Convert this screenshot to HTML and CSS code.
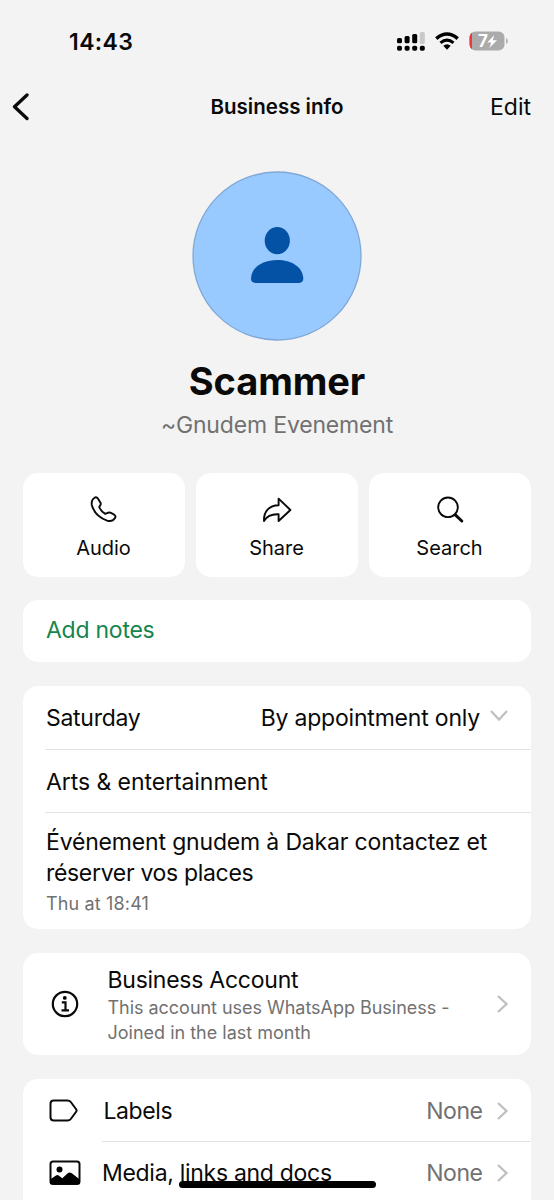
FILE: index.html
```
<!DOCTYPE html>
<html lang="en">
<head>
<meta charset="utf-8">
<title>Business info</title>
<link rel="stylesheet" href="styles.css">
</head>
<body>
<div class="screen">
  <header class="status">
    <span class="time">14:43</span>
    <div class="status-icons">
      <svg class="signal" width="28" height="20" viewBox="0 0 28 20">
        <rect x="0" y="7" width="5" height="5.2" rx="1.5"/>
        <rect x="7.6" y="5" width="5" height="7.2" rx="1.5"/>
        <rect x="15.2" y="3" width="5" height="9.2" rx="1.5"/>
        <rect x="22.8" y="1" width="5" height="12" rx="1.5" fill="#c9c9c9"/>
        <rect x="0" y="14.7" width="5" height="5" rx="1.8"/>
        <rect x="7.6" y="14.7" width="5" height="5" rx="1.8"/>
        <rect x="15.2" y="14.7" width="5" height="5" rx="1.8"/>
        <rect x="22.8" y="14.7" width="5" height="5" rx="1.8"/>
      </svg>
      <svg class="wifi" width="24" height="18" viewBox="0 0 24 18">
        <path d="M1.300 6.600Q12-2.600 22.700 6.600" fill="none" stroke="#000" stroke-width="3.500"/>
        <path d="M5.500 10.900Q12 5.300 18.500 10.900" fill="none" stroke="#000" stroke-width="3.200"/>
        <path d="M8.300 13.800Q12 10.600 15.700 13.800L12 17.800Z"/>
      </svg>
      <div class="battery">
        <svg width="40" height="20" viewBox="0 0 40 20">
          <rect x="0.5" y="0.5" width="35" height="19" rx="6" fill="#ababab"/>
          <path d="M3 1.700A6 6 0 0 0 .5 6.500V13.500A6 6 0 0 0 3 18.300Z" fill="#f0383c"/>
          <path d="M37 7Q39 8 39 10T37 13Z" fill="#b4b4b4"/>
          <path d="M25.300 4L18.300 11.500H22.300L20.300 17L28 9.200H23.700Z" fill="#fff"/>
        </svg>
        <span class="level">7</span>
      </div>
    </div>
  </header>

  <nav class="nav">
    <svg class="back" width="18" height="28" viewBox="0 0 18 28"><path d="M16 2L3.500 13.700L16 25.500" fill="none" stroke="#0a0a0a" stroke-width="3.300" stroke-linecap="round" stroke-linejoin="round"/></svg>
    <h1 class="nav-title">Business info</h1>
    <span class="edit">Edit</span>
  </nav>

  <section class="profile">
    <svg class="avatar" width="170" height="170" viewBox="0 0 170 170">
      <circle cx="85" cy="85" r="84" fill="#99caff" stroke="#80a8d6" stroke-width="1.300"/>
      <ellipse cx="85.300" cy="69.700" rx="12.600" ry="13.600" fill="#0452a5"/>
      <path d="M59 107.500C59.500 96 71 89 85.300 89S110.800 96 111.300 107.500Q111.300 111.900 107 111.900H63.500Q59 111.900 59 107.500Z" fill="#0452a5"/>
    </svg>
    <h2 class="name">Scammer</h2>
    <p class="alias">~Gnudem Evenement</p>
  </section>

  <section class="actions">
    <div class="action">
      <svg width="30" height="30" viewBox="0 0 30 30"><path d="M6 2.500Q7.800 1.900 8.900 3.500L11.500 7.700Q12.200 9 11.300 10.300L10.200 12Q12 16.500 16.300 18.900L18 18.100Q19.800 17.200 21.400 17.700L25.200 19.700Q27.300 21 26 23Q23.500 27 18.600 25.800Q6 21.600 2.800 10Q2 4.800 6 2.500Z"/></svg>
      <span>Audio</span>
    </div>
    <div class="action">
      <svg width="30" height="30" viewBox="0 0 30 30"><path d="M16.600 3.600L28.400 15L16.600 26V19.300C9.500 18.900 5 21 2 25.900C1.600 16.500 7 10.500 16.600 10.300Z"/></svg>
      <span>Share</span>
    </div>
    <div class="action">
      <svg width="30" height="30" viewBox="0 0 30 30"><circle cx="13" cy="12.300" r="9.800"/><path d="M20.300 19.800L26.800 26" stroke-width="3" stroke-linecap="round"/></svg>
      <span>Search</span>
    </div>
  </section>

  <section class="card notes"><span class="add-notes">Add notes</span></section>

  <section class="card details">
    <div class="detail-row detail-hours">
      <span class="day">Saturday</span>
      <span class="hours">By appointment only</span>
      <svg width="20" height="14" viewBox="0 0 20 14"><path d="M2 2L10 10.600L18 2" fill="none" stroke="#bfbfbf" stroke-width="2.200"/></svg>
    </div>
    <div class="detail-row"><span class="category">Arts &amp; entertainment</span></div>
    <div class="about">
      <p class="about-text"><span class="line-one">Événement gnudem à Dakar contactez et</span><br><span class="line-two">réserver vos places</span></p>
      <p class="about-date">Thu at 18:41</p>
    </div>
  </section>

  <section class="card account">
    <svg class="info" width="28" height="28" viewBox="0 0 28 28"><circle cx="14" cy="14" r="12.200" fill="none" stroke="#0a0a0a" stroke-width="2.200"/><circle cx="13.800" cy="7.900" r="1.900"/><path d="M10.800 12.400H14.500V20.200M10.500 20.400H18" fill="none" stroke="#0a0a0a" stroke-width="2.200"/></svg>
    <div class="account-text">
      <p class="account-title">Business Account</p>
      <p class="account-sub"><span class="sub-one">This account uses WhatsApp Business -</span><br><span class="sub-two">Joined in the last month</span></p>
    </div>
    <svg class="chevron" width="14" height="20" viewBox="0 0 14 20"><path d="M2 2L10.500 10L2 18" fill="none" stroke="#bfbfbf" stroke-width="2.300"/></svg>
  </section>

  <section class="card links">
    <div class="link-row">
      <svg class="link-icon" width="34" height="28" viewBox="0 0 34 28"><path d="M5.800 3.500H19.500Q21.600 3.500 22.800 5L28.300 12.500Q29 13.500 28.300 14.500L22.800 22Q21.600 23.500 19.500 23.500H5.800Q2.500 23.500 2.500 20.300V6.700Q2.500 3.500 5.800 3.500Z" fill="none" stroke="#0a0a0a" stroke-width="2"/></svg>
      <div class="link-body">
        <span class="labels">Labels</span><span class="none">None</span>
        <svg class="chevron" width="14" height="20" viewBox="0 0 14 20"><path d="M2 2L10.500 10L2 18" fill="none" stroke="#bfbfbf" stroke-width="2.300"/></svg>
      </div>
    </div>
    <div class="link-row">
      <svg class="link-icon" width="34" height="28" viewBox="0 0 34 28"><rect x="2.500" y="2.500" width="29" height="22.600" rx="2.500" fill="none" stroke="#0a0a0a" stroke-width="2"/><circle cx="11.500" cy="10.500" r="3"/><path d="M2.500 20.300L8 16.500Q9.500 15.500 11 16.700L14.300 19.300L20 14.100Q21.800 12.700 23.800 14.300L31.500 20.300V25.100H2.500Z"/></svg>
      <div class="link-body">
        <span class="media">Media, links and docs</span><span class="none">None</span>
        <svg class="chevron" width="14" height="20" viewBox="0 0 14 20"><path d="M2 2L10.500 10L2 18" fill="none" stroke="#bfbfbf" stroke-width="2.300"/></svg>
      </div>
    </div>
  </section>
  <div class="home-indicator"></div>
</div>
</body>
</html>
```
FILE: styles.css
```
* { box-sizing: border-box; }
body, h1, h2, p { margin: 0; }
svg { display: block; flex: none; }
body {
  background: #f3f3f3;
  color: #0a0a0a;
  font-family: Inter, "Liberation Sans", sans-serif;
  font-size: 23px;
}
.screen {
  position: relative;
  width: 554px;
  height: 1200px;
  overflow: hidden;
  white-space: nowrap;
}
.status {
  display: flex;
  justify-content: space-between;
  height: 82px;
  padding: 0 45px 0 69px;
}
.time { font-size: 23px; font-weight: 600; line-height: 85px; letter-spacing: 0.4px; }
.status-icons { display: flex; padding-top: 31px; }
.wifi { margin: 1px 10px 0 10px; }
.battery { position: relative; height: 20px; }
.level {
  position: absolute;
  left: 9px;
  top: 0;
  color: #fff;
  font-size: 17px;
  font-weight: 700;
  line-height: 21px;
}
.nav {
  display: grid;
  grid-template-columns: 100px 1fr 100px;
  align-items: center;
  height: 50px;
  padding: 0 23px 0 11px;
}
.nav-title {
  padding: 0 0 2px 12px;
  text-align: center;
  font-size: 20.5px;
  font-weight: 600;
}
.edit { text-align: right; font-size: 23px; }
.profile {
  display: flex;
  flex-direction: column;
  align-items: center;
  height: 341px;
  padding-top: 39px;
}
.name { margin-top: 17px; font-size: 38px; line-height: 46px; font-weight: 700; letter-spacing: -0.1px; }
.alias { margin-top: 6px; color: #717171; line-height: 30px; letter-spacing: -0.17px; }
.actions {
  display: grid;
  grid-template-columns: repeat(3, 1fr);
  gap: 11px;
  height: 104px;
  margin: 0 23px;
}
.action {
  display: flex;
  flex-direction: column;
  align-items: center;
  padding: 22px 1px 0 0;
  border-radius: 15px;
  background: #fff;
  font-size: 20px;
}
.action svg { fill: none; stroke: #0a0a0a; stroke-width: 1.9; stroke-linejoin: round; }
.action span { margin-top: 10px; line-height: 26px; }
.card { margin: 0 23px; border-radius: 15px; background: #fff; }
.notes { height: 62px; margin-top: 23px; padding-left: 23px; line-height: 61px; }
.add-notes { color: #15854f; letter-spacing: -0.25px; }
.details { height: 243px; margin-top: 24px; padding-left: 22px; }
.detail-row {
  display: flex;
  align-items: center;
  height: 63px;
  padding: 2px 22px 0 1px;
  border-bottom: 1px solid #e2e2e2;
}
.detail-hours { height: 64px; padding-top: 0; }
.day { letter-spacing: -0.28px; }
.hours { margin-left: auto; margin-right: 9px; letter-spacing: -0.2px; }
.category { letter-spacing: -0.07px; }
.detail-row svg { margin-bottom: 3px; }
.about { padding: 14px 0 0 1px; }
.about-text { line-height: 31px; }
.line-one { letter-spacing: -0.17px; }
.line-two { letter-spacing: -0.32px; }
.about-date { margin-top: 3px; color: #717171; font-size: 18px; line-height: 24px; letter-spacing: 0.15px; }
.account {
  display: flex;
  align-items: center;
  height: 102px;
  margin-top: 24px;
  padding: 0 21px 0 28px;
}
.account-text { flex: 1; margin-left: 28.5px; padding-top: 2px; }
.account-title { line-height: 30px; letter-spacing: -0.25px; }
.account-sub { color: #717171; font-size: 18px; line-height: 25px; }
.sub-one { letter-spacing: -0.03px; }
.links { height: 140px; margin-top: 24px; padding-left: 25px; }
.link-row { display: flex; align-items: center; height: 63px; }
.link-row + .link-row { height: 61px; }
.link-body {
  display: flex;
  flex: 1;
  align-items: center;
  height: 63px;
  margin-left: 20px;
  padding-right: 21px;
}
.link-row:first-child .link-body { padding-top: 2px; border-bottom: 1px solid #e2e2e2; }
.labels { margin-left: 1.5px; letter-spacing: -0.4px; }
.media { letter-spacing: -0.3px; }
.none { margin-left: auto; margin-right: 13.5px; color: #717171; letter-spacing: -0.45px; }
.home-indicator {
  position: absolute;
  left: 179px;
  top: 1181px;
  width: 197px;
  height: 7px;
  border-radius: 4px;
  background: #000;
}
```
